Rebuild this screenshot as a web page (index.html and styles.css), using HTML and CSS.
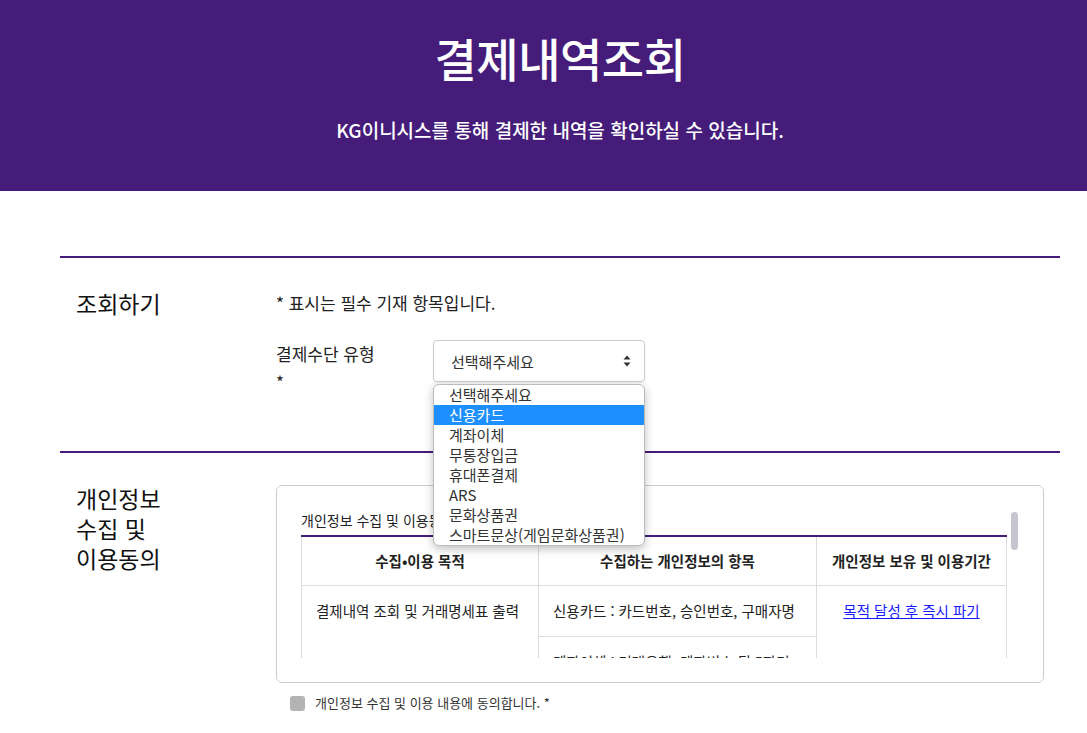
FILE: index.html
```html
<!DOCTYPE html>
<html lang="ko">
<head>
    <meta charset="UTF-8">
    <meta name="viewport" content="width=device-width, initial-scale=1.0">
    <title>결제내역조회 - KG이니시스</title>
    <link rel="stylesheet" href="styles.css">
</head>
<body>
<div class="page">
    <!-- Hero -->
    <header class="hero">
        <h1 class="hero-title">결제내역조회</h1>
        <p class="hero-desc">KG이니시스를 통해 결제한 내역을 확인하실 수 있습니다.</p>
    </header>

    <main class="container">
        <!-- 조회하기 -->
        <section class="section">
            <h2 class="section-title">조회하기</h2>
            <div class="section-body">
                <p class="notice">* 표시는 필수 기재 항목입니다.</p>
                <div class="field">
                    <label class="field-label">결제수단 유형<span class="req">*</span></label>
                    <div class="select-wrap">
                        <div class="select-box">
                            <span>선택해주세요</span>
                            <svg class="select-arrow" width="8" height="12" viewBox="0 0 8 12">
                                <path d="M4 0.5 L7.5 4.5 L0.5 4.5 Z" fill="#333"/>
                                <path d="M4 11.5 L7.5 7.5 L0.5 7.5 Z" fill="#333"/>
                            </svg>
                        </div>
                        <ul class="select-list">
                            <li>선택해주세요</li>
                            <li class="active">신용카드</li>
                            <li>계좌이체</li>
                            <li>무통장입금</li>
                            <li>휴대폰결제</li>
                            <li>ARS</li>
                            <li>문화상품권</li>
                            <li>스마트문상(게임문화상품권)</li>
                        </ul>
                    </div>
                </div>
            </div>
        </section>

        <!-- 개인정보 수집 및 이용동의 -->
        <section class="section">
            <h2 class="section-title">개인정보<br>수집 및<br>이용동의</h2>
            <div class="section-body">
                <div class="terms-box">
                    <div class="terms-inner">
                        <div class="terms-scroll">
                            <p class="terms-title">개인정보 수집 및 이용동의</p>
                            <table class="terms-table">
                                <thead>
                                    <tr>
                                        <th class="col-purpose">수집•이용 목적</th>
                                        <th class="col-items">수집하는 개인정보의 항목</th>
                                        <th class="col-period">개인정보 보유 및 이용기간</th>
                                    </tr>
                                </thead>
                                <tbody>
                                    <tr>
                                        <td rowspan="5">결제내역 조회 및 거래명세표 출력</td>
                                        <td>신용카드 : 카드번호, 승인번호, 구매자명</td>
                                        <td rowspan="5" class="center"><a href="#">목적 달성 후 즉시 파기</a></td>
                                    </tr>
                                    <tr><td>계좌이체 : 거래은행, 계좌번호 뒤 5자리</td></tr>
                                    <tr><td>무통장입금 : 입금은행, 입금자명</td></tr>
                                    <tr><td>휴대폰결제 : 휴대폰번호, 통신사</td></tr>
                                    <tr><td>문화상품권 : 상품권번호, 승인번호</td></tr>
                                </tbody>
                            </table>
                        </div>
                        <div class="scrollbar"><div class="scrollbar-thumb"></div></div>
                    </div>
                </div>
                <label class="agree">
                    <span class="checkbox"></span>
                    개인정보 수집 및 이용 내용에 동의합니다. *
                </label>
            </div>
        </section>
    </main>
</div>
</body>
</html>
```

FILE: styles.css
```css
/* Base */
* {
    margin: 0;
    padding: 0;
    box-sizing: border-box;
}

html, body {
    overflow: hidden;
}

body {
    background: #fff;
    color: #222;
    font-family: "Noto Sans CJK KR", "Noto Sans", sans-serif;
}

.page {
    width: 1120px;
}

/* Hero */
.hero {
    background: #451c7a;
    color: #fff;
    text-align: center;
    height: 191px;
    padding-top: 28px;
}

.hero-title {
    font-size: 46px;
    font-weight: 500;
    line-height: 58px;
    letter-spacing: -0.5px;
}

.hero-desc {
    margin-top: 31px;
    font-size: 19px;
    font-weight: 500;
    line-height: 26px;
}

/* Sections */
.container {
    width: 1000px;
    margin: 0 auto;
    padding-top: 65px;
}

.section {
    display: flex;
    border-top: 2px solid #451c7a;
    padding-top: 33px;
}

.section:first-child {
    height: 195px;
}

.section-title {
    width: 216px;
    flex-shrink: 0;
    padding-left: 16px;
    margin-top: -3px;
    font-size: 23px;
    font-weight: 400;
    line-height: 30px;
    color: #111;
}

.section-body {
    flex: 1;
    padding-right: 15px;
}

.notice {
    font-size: 17px;
    line-height: 24px;
}

/* Field */
.field {
    display: flex;
    margin-top: 25px;
}

.field-label {
    width: 157px;
    padding-right: 40px;
    font-size: 17px;
    line-height: 28px;
}

.field-label .req {
    display: block;
}

.select-wrap {
    position: relative;
    width: 212px;
}

.select-box {
    height: 42px;
    border: 1px solid #ccc;
    border-radius: 4px;
    box-shadow: 0 1px 2px rgba(0, 0, 0, 0.08);
    padding: 0 13px 0 17px;
    display: flex;
    align-items: center;
    justify-content: space-between;
    font-size: 15px;
    color: #333;
}

.select-list {
    position: absolute;
    top: 44px;
    left: 0;
    width: 212px;
    list-style: none;
    background: #fff;
    border: 1px solid #bbb;
    border-radius: 6px;
    box-shadow: 0 3px 10px rgba(0, 0, 0, 0.25);
    overflow: hidden;
    z-index: 10;
}

.select-list li {
    height: 20px;
    line-height: 20px;
    padding-left: 15px;
    font-size: 15px;
    color: #333;
    white-space: nowrap;
}

.select-list li.active {
    background: #1e8fff;
    color: #fff;
}

/* Terms */
.terms-box {
    width: 768px;
    margin-top: -1px;
    border: 1px solid #ccc;
    border-radius: 6px;
    padding: 24px 22px 24px 24px;
}

.terms-inner {
    display: flex;
    height: 148px;
}

.terms-scroll {
    flex: 1;
    overflow: hidden;
}

.scrollbar {
    width: 14px;
    flex-shrink: 0;
    padding: 2px 3px 0 4px;
}

.scrollbar-thumb {
    height: 38px;
    border-radius: 4px;
    background: #c5c5d0;
}

.terms-title {
    font-size: 14px;
    line-height: 20px;
    margin-bottom: 5px;
    color: #222;
}

.terms-table {
    width: 706px;
    table-layout: fixed;
    border-collapse: collapse;
    border-top: 2px solid #451c7a;
    font-size: 14.5px;
}

.terms-table th,
.terms-table td {
    border: 1px solid #ddd;
    border-top: none;
    color: #222;
    white-space: nowrap;
}

.terms-table th {
    height: 49px;
    font-weight: 700;
    text-align: center;
}

.terms-table td {
    height: 51px;
    padding: 12px 8px 12px 14px;
    vertical-align: top;
    line-height: 25px;
}

.terms-table .col-purpose { width: 237px; }
.terms-table .col-items { width: 278px; }

.terms-table td.center {
    text-align: center;
    padding-left: 8px;
}

.terms-table a {
    color: #1a1aff;
}

/* Agree */
.agree {
    display: flex;
    align-items: center;
    gap: 10px;
    margin-top: 10px;
    padding-left: 14px;
    font-size: 13px;
    line-height: 20px;
    color: #333;
}

.checkbox {
    width: 15px;
    height: 15px;
    border-radius: 3px;
    background: #b3b3b3;
}
```
